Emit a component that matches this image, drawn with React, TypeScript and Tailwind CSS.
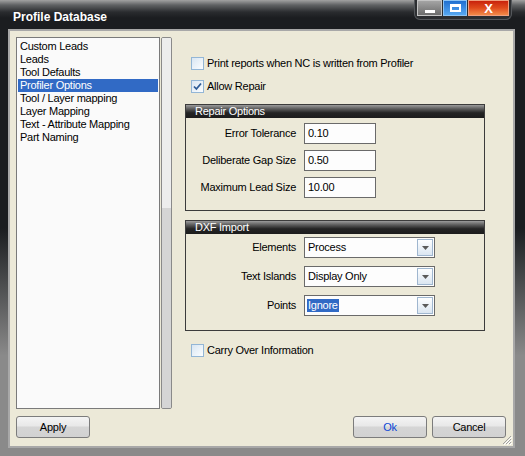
import React from 'react'

const items = [
  'Custom Leads',
  'Leads',
  'Tool Defaults',
  'Profiler Options',
  'Tool / Layer mapping',
  'Layer Mapping',
  'Text - Attribute Mapping',
  'Part Naming',
]

function CheckBox({ checked }: { checked?: boolean }) {
  return (
    <span className="w-[13px] h-[13px] border border-[#93b6d6] bg-linear-to-br from-[#d9e6f2] to-[#fbfdff] flex items-center justify-center shrink-0">
      {checked && (
        <svg width="9" height="9" viewBox="0 0 9 9">
          <path d="M1 4.5 L3.4 7 L8 1.5" stroke="#2d5b96" strokeWidth="1.8" fill="none" />
        </svg>
      )}
    </span>
  )
}

function Group({ title, className, children }: { title: string; className: string; children: React.ReactNode }) {
  return (
    <div className={'w-[300px] border border-[#3c3c3c] flex flex-col ' + className}>
      <div className="h-[13px] leading-[13px] pl-[9px] text-white bg-[linear-gradient(to_bottom,#9c9c9c_0%,#5c5c5c_30%,#242424_60%,#1c1c1c_100%)]">
        {title}
      </div>
      {children}
    </div>
  )
}

function Field({ label, value }: { label: string; value: string }) {
  return (
    <div className="flex items-center h-[21px]">
      <div className="w-[110px] text-right text-black">{label}</div>
      <div className="ml-[8px] w-[72px] h-[21px] border border-[#6a6a6a] bg-[#fdfdfd] pl-[3px] leading-[19px] text-black">
        {value}
      </div>
    </div>
  )
}

function Select({ label, value, selected }: { label: string; value: string; selected?: boolean }) {
  return (
    <div className="flex items-center h-[21px]">
      <div className="w-[110px] text-right text-black">{label}</div>
      <div className="ml-[8px] w-[131px] h-[21px] border border-[#6a6a6a] bg-[#fdfdfd] flex items-center justify-between pl-[2px] pr-px">
        <span className={selected ? 'bg-[#316ac5] text-white leading-[13px] px-px' : 'text-black leading-[13px] px-px'}>{value}</span>
        <span className="w-[16px] h-[17px] border border-[#9fb6cf] bg-linear-to-b from-[#fdfeff] to-[#dbe6f1] flex items-center justify-center">
          <svg width="7" height="4" viewBox="0 0 7 4">
            <path d="M0 0 L7 0 L3.5 4 Z" fill="#5a5a5a" />
          </svg>
        </span>
      </div>
    </div>
  )
}

function Button({ label, blue }: { label: string; blue?: boolean }) {
  return (
    <div
      className={
        'w-[74px] h-[22px] rounded-[3px] border border-[#7c7c7c] bg-[linear-gradient(to_bottom,#f4f4f4_0%,#e8e8e8_45%,#d5d5d5_50%,#d2d2d2_100%)] flex items-center justify-center ' +
        (blue ? 'text-[#0b46d6]' : 'text-black')
      }
    >
      {label}
    </div>
  )
}

export default function App() {
  return (
    <div className="w-[525px] h-[456px] flex flex-col font-['Liberation_Sans',Arial,sans-serif] text-[11px] tracking-[-0.25px] bg-[linear-gradient(to_bottom,#a2a2a2_0px,#606264_5px,#2a2c2f_12px,#1b1d20_18px,#1b1d20_50%,#8a8a8a_78%,#8a8a8a_100%)]">
      {/* title bar */}
      <div className="h-[29px] flex justify-between shrink-0">
        <div className="mt-[10px] ml-[13px] text-[12px] leading-[14px] font-bold text-white tracking-normal">Profile Database</div>
        <div className="mr-[13px] h-[20px] px-[2px] pb-[3px] flex gap-px rounded-b-[6px] bg-[#2c2e31] border-x border-b border-[#55585c]">
          <div className="w-[25px] h-[16px] bg-linear-to-b from-[#a4a4a4] to-[#6c6c6c] border border-[#c4c4c4] flex items-center justify-center">
            <div className="w-[10px] h-[3px] bg-white mt-[6px]" />
          </div>
          <div className="w-[24px] h-[16px] bg-linear-to-b from-[#1f6fd0] to-[#56a8f2] border border-[#8cc4f5] flex items-center justify-center">
            <div className="w-[11px] h-[8px] border-2 border-white border-t-[3px]" />
          </div>
          <div className="w-[41px] h-[16px] bg-linear-to-b from-[#c8200c] via-[#e04a1c] to-[#f28a48] border border-[#f0a080] flex items-center justify-center text-white font-bold text-[13px] leading-none tracking-normal">
            X
          </div>
        </div>
      </div>

      {/* body */}
      <div className="flex flex-1">
        <div className="w-[8px]" />
        <div className="relative w-[507px] h-[419px] border-2 border-[#a8a8a8] bg-[#ece9d8] flex flex-col pt-[6px] pl-[6px] pr-[7px]">
          <div className="flex h-[372px]">
            <div className="w-[144px] h-full border border-[#7a7a7a] bg-[#fafafa] pt-[2px] px-px flex flex-col">
              {items.map((it, i) => (
                <div
                  key={it}
                  className={
                    'h-[13px] leading-[13px] pl-[2px] ' + (i === 3 ? 'bg-[#316ac5] text-white' : 'text-black')
                  }
                >
                  {it}
                </div>
              ))}
            </div>
            <div className="ml-px w-[11px] h-full border border-[#8a8a8a] rounded-[2px] flex flex-col overflow-hidden">
              <div className="h-[170px] bg-[#ededed]" />
              <div className="flex-1 bg-[#d5d5d5]" />
            </div>

            <div className="ml-[13px] flex flex-col">
              <div className="mt-[20px] ml-[6px] flex items-center gap-[3px] h-[13px] text-black">
                <CheckBox />
                <span>Print reports when NC is written from Profiler</span>
              </div>
              <div className="mt-[10px] ml-[6px] flex items-center gap-[3px] h-[13px] text-black">
                <CheckBox checked />
                <span>Allow Repair</span>
              </div>

              <Group title="Repair Options" className="mt-[11px] h-[107px]">
                <div className="flex flex-col gap-[6px] pt-[5px]">
                  <Field label="Error Tolerance" value="0.10" />
                  <Field label="Deliberate Gap Size" value="0.50" />
                  <Field label="Maximum Lead Size" value="10.00" />
                </div>
              </Group>

              <Group title="DXF Import" className="mt-[9px] h-[111px]">
                <div className="flex flex-col gap-[8px] pt-[3px]">
                  <Select label="Elements" value="Process" />
                  <Select label="Text Islands" value="Display Only" />
                  <Select label="Points" value="Ignore" selected />
                </div>
              </Group>

              <div className="mt-[13px] ml-[6px] flex items-center gap-[3px] h-[13px] text-black">
                <CheckBox />
                <span>Carry Over Information</span>
              </div>
            </div>
          </div>

          <div className="mt-[7px] flex">
            <Button label="Apply" />
            <div className="flex-1" />
            <div className="flex gap-[5px]">
              <Button label="Ok" blue />
              <Button label="Cancel" />
            </div>
          </div>

          {/* resize grip */}
          <svg className="absolute right-px bottom-px" width="11" height="11" viewBox="0 0 11 11">
            <path d="M10 2 L2 10 M10 5 L5 10 M10 8 L8 10" stroke="#a0a0a0" strokeWidth="1" />
            <path d="M11 3 L3 11 M11 6 L6 11 M11 9 L9 11" stroke="#ffffff" strokeWidth="1" />
          </svg>
        </div>
        <div className="w-[10px]" />
      </div>
      <div className="h-[8px] shrink-0" />
    </div>
  )
}
